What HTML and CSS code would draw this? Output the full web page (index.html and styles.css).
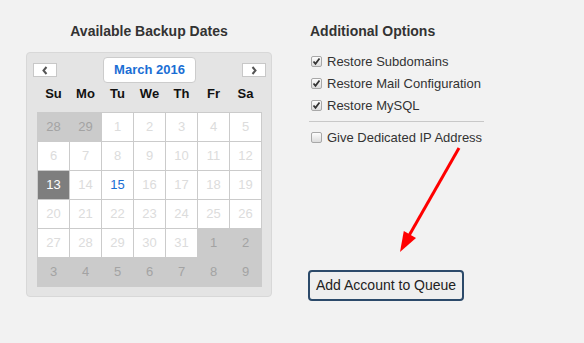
FILE: index.html
```html
<!doctype html>
<html lang="en">
<head>
  <meta charset="UTF-8">
  <title>Restore Account</title>
  <link rel="stylesheet" href="styles.css">
</head>
<body>
<div class="page">
  <div class="dates">
    <h2>Available Backup Dates</h2>
    <div class="calendar">
      <div class="cal-head">
        <button type="button" class="nav">
          <svg width="8" height="9" viewBox="0 0 8 9"><polyline points="5.5,1 2.5,4.5 5.5,8" fill="none" stroke="#555" stroke-width="2"/></svg>
        </button>
        <div class="month">March 2016</div>
        <button type="button" class="nav">
          <svg width="8" height="9" viewBox="0 0 8 9"><polyline points="2.5,1 5.5,4.5 2.5,8" fill="none" stroke="#555" stroke-width="2"/></svg>
        </button>
      </div>
      <div class="weekdays">
        <span>Su</span><span>Mo</span><span>Tu</span><span>We</span><span>Th</span><span>Fr</span><span>Sa</span>
      </div>
      <div class="days">
        <span class="other">28</span><span class="other">29</span><span>1</span><span>2</span><span>3</span><span>4</span><span>5</span>
        <span>6</span><span>7</span><span>8</span><span>9</span><span>10</span><span>11</span><span>12</span>
        <span class="selected">13</span><span>14</span><span class="avail">15</span><span>16</span><span>17</span><span>18</span><span>19</span>
        <span>20</span><span>21</span><span>22</span><span>23</span><span>24</span><span>25</span><span>26</span>
        <span>27</span><span>28</span><span>29</span><span>30</span><span>31</span><span class="other">1</span><span class="other">2</span>
        <span class="other">3</span><span class="other">4</span><span class="other">5</span><span class="other">6</span><span class="other">7</span><span class="other">8</span><span class="other">9</span>
      </div>
    </div>
  </div>

  <div class="options">
    <h2>Additional Options</h2>
    <label class="opt"><span class="box"><svg width="9" height="9" viewBox="0 0 9 9"><polyline points="1.5,4.5 3.5,6.8 7.5,1.5" fill="none" stroke="#333" stroke-width="1.8"/></svg></span>Restore Subdomains</label>
    <label class="opt"><span class="box"><svg width="9" height="9" viewBox="0 0 9 9"><polyline points="1.5,4.5 3.5,6.8 7.5,1.5" fill="none" stroke="#333" stroke-width="1.8"/></svg></span>Restore Mail Configuration</label>
    <label class="opt"><span class="box"><svg width="9" height="9" viewBox="0 0 9 9"><polyline points="1.5,4.5 3.5,6.8 7.5,1.5" fill="none" stroke="#333" stroke-width="1.8"/></svg></span>Restore MySQL</label>
    <hr>
    <label class="opt"><span class="box"></span>Give Dedicated IP Address</label>
    <button type="button" class="queue">Add Account to Queue</button>
  </div>
</div>

<svg class="arrow" width="584" height="343" viewBox="0 0 584 343">
  <line x1="459" y1="148" x2="408.5" y2="236.5" stroke="#f00" stroke-width="3"/>
  <polygon points="400,252 403.8,231 416,238" fill="#f00"/>
</svg>
</body>
</html>
```

FILE: styles.css
```css
html, body { margin: 0; padding: 0; }
body { background: #f2f2f2; font-family: "Liberation Sans", Arial, sans-serif; color: #333; width: 584px; height: 343px; position: relative; overflow: hidden; }
button { font-family: "Liberation Sans", Arial, sans-serif; cursor: pointer; }

.page { display: flex; padding: 23px 0 0 26px; gap: 37px; }
h2 { margin: 0; font-size: 14px; line-height: 17px; font-weight: bold; color: #333; }

.dates { width: 246px; }
.dates h2 { text-align: center; margin-bottom: 12px; }

.calendar { background: #e4e4e4; border: 1px solid #d8d8d8; border-radius: 4px; padding: 4px 9px 9px 10px; }
.cal-head { display: flex; justify-content: space-between; align-items: center; margin: 0 -4px; height: 26px; }
.nav { width: 24px; height: 14px; padding: 0; margin: 0; border: 1px solid #c8c8c8; background: #fff; border-radius: 0; display: flex; align-items: center; justify-content: center; }
.month { height: 26px; box-sizing: border-box; padding: 4px 10px; border: 1px solid #ccc; border-radius: 4px; background: #fff; color: #1a6ed4; font-weight: bold; font-size: 13px; line-height: 16px; }

.weekdays { display: grid; grid-template-columns: repeat(7, 31px); gap: 1px; padding: 0 1px; margin-bottom: 7px; }
.weekdays span { text-align: center; font-size: 13px; line-height: 22px; font-weight: bold; color: #111; }

.days { display: grid; grid-template-columns: repeat(7, 31px); grid-auto-rows: 28px; gap: 1px; padding: 1px; background: #cbcbcb; }
.days span { background: #fff; color: #dcdcdc; text-align: center; font-size: 13px; line-height: 27px; }
.days span.other { background: #cbcbcb; color: #a3a3a3; }
.days span.selected { background: #7e7e7e; color: #fff; }
.days span.avail { color: #1a6ed4; }

.options { width: 175px; padding-top: 0; }
.options h2 { margin-bottom: 10px; padding-left: 1px; }
.opt { display: flex; align-items: center; height: 22px; font-size: 13px; color: #333; padding-left: 2px; }
.box { width: 9px; height: 9px; border: 1px solid #a8a8a8; border-radius: 2px; background: linear-gradient(#fdfdfd, #dcdcdc); margin-right: 5px; display: flex; align-items: center; justify-content: center; }
hr { border: 0; border-top: 1px solid #c8c8c8; margin: 5px 0 4px; }

.queue { margin: 122px 0 0 -1px; display: block; padding: 5px 6px; border: 2px solid #2c4a6a; border-radius: 4px; background: #efefef; color: #222; font-size: 14px; line-height: 17px; }

.arrow { position: absolute; left: 0; top: 0; pointer-events: none; }
```
